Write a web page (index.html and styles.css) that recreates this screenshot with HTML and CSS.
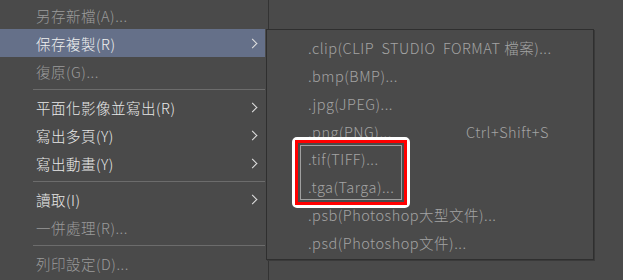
FILE: index.html
```html
<!DOCTYPE html>
<html lang="zh-Hant">
<head>
    <meta charset="UTF-8">
    <meta name="viewport" content="width=device-width, initial-scale=1.0">
    <title>保存複製</title>
    <link rel="stylesheet" href="styles.css">
</head>
<body>

    <div class="menu">
        <div class="item off">另存新檔(A)...</div>
        <div class="item hot">保存複製(R)<span class="arrow"></span></div>
        <div class="item off">復原(G)...</div>
        <div class="sep"></div>
        <div class="item">平面化影像並寫出(R)<span class="arrow"></span></div>
        <div class="item">寫出多頁(Y)<span class="arrow"></span></div>
        <div class="item">寫出動畫(Y)<span class="arrow"></span></div>
        <div class="sep"></div>
        <div class="item">讀取(I)<span class="arrow"></span></div>
        <div class="item off">一併處理(R)...</div>
        <div class="sep"></div>
        <div class="item off">列印設定(D)...</div>
    </div>

    <!-- 子選單 -->
    <div class="submenu">
        <div class="sub-item"><span>.clip(CLIP&nbsp; STUDIO&nbsp; FORMAT 檔案)...</span></div>
        <div class="sub-item"><span>.bmp(BMP)...</span></div>
        <div class="sub-item"><span>.jpg(JPEG)...</span></div>
        <div class="sub-item"><span>.png(PNG)...</span><span class="key">Ctrl+Shift+S</span></div>
        <div class="sub-item"><span>.tif(TIFF)...</span></div>
        <div class="sub-item"><span>.tga(Targa)...</span></div>
        <div class="sub-item"><span>.psb(Photoshop大型文件)...</span></div>
        <div class="sub-item"><span>.psd(Photoshop文件)...</span></div>
    </div>

    <!-- 標註框 -->
    <div class="mark">
        <div class="mark-red">
            <div class="mark-line"></div>
        </div>
    </div>

</body>
</html>
```

FILE: styles.css
```css
body {
    margin: 0;
    width: 623px;
    height: 280px;
    overflow: hidden;
    background: #4a4a4a;
    font-family: "Noto Sans CJK TC", "Noto Sans", sans-serif;
    font-weight: 300;
    font-size: 14.5px;
    letter-spacing: 0.5px;
    color: #e8e8e8;
}

.menu {
    width: 269px;
    height: 280px;
    padding-top: 1px;
    box-sizing: border-box;
    border-right: 1px solid #333;
    display: flex;
    flex-direction: column;
}

.item {
    height: 28px;
    flex: none;
    display: flex;
    align-items: center;
    justify-content: space-between;
    padding: 0 9px 0 36px;
    margin-right: 3px;
}

.item.off {
    color: #9b9b9b;
}

.item.hot {
    background: #657089;
    color: #f0f0f0;
}

.arrow {
    width: 6px;
    height: 6px;
    border-top: 1.5px solid #e0e0e0;
    border-right: 1.5px solid #e0e0e0;
    transform: rotate(45deg);
}

.sep {
    height: 8px;
    flex: none;
    margin-left: 33px;
    margin-right: 3px;
    display: flex;
    align-items: center;
}

.sep::before {
    content: "";
    flex: 1;
    height: 1px;
    background: #6c6c6c;
}

.submenu {
    position: absolute;
    left: 266px;
    top: 29px;
    width: 328px;
    height: 231px;
    box-sizing: border-box;
    padding-top: 4px;
    background: #4a4a4a;
    border: 1px solid #2f2f2f;
    box-shadow: 1px 1px 0 #3a3a3a;
    color: #a3a3a3;
}

.sub-item {
    height: 27.75px;
    display: flex;
    align-items: center;
    padding-left: 41px;
}

.key {
    position: absolute;
    left: 199px;
}

.mark {
    position: absolute;
    left: 292px;
    top: 137px;
    width: 118px;
    height: 71px;
    box-sizing: border-box;
    border: 3px solid #fff;
    border-radius: 5px;
}

.mark-red {
    height: 100%;
    box-sizing: border-box;
    border: 3px solid #ff0000;
    padding: 2px;
}

.mark-line {
    height: 100%;
    box-sizing: border-box;
    border: 1px solid #a0a0a0;
}
```
